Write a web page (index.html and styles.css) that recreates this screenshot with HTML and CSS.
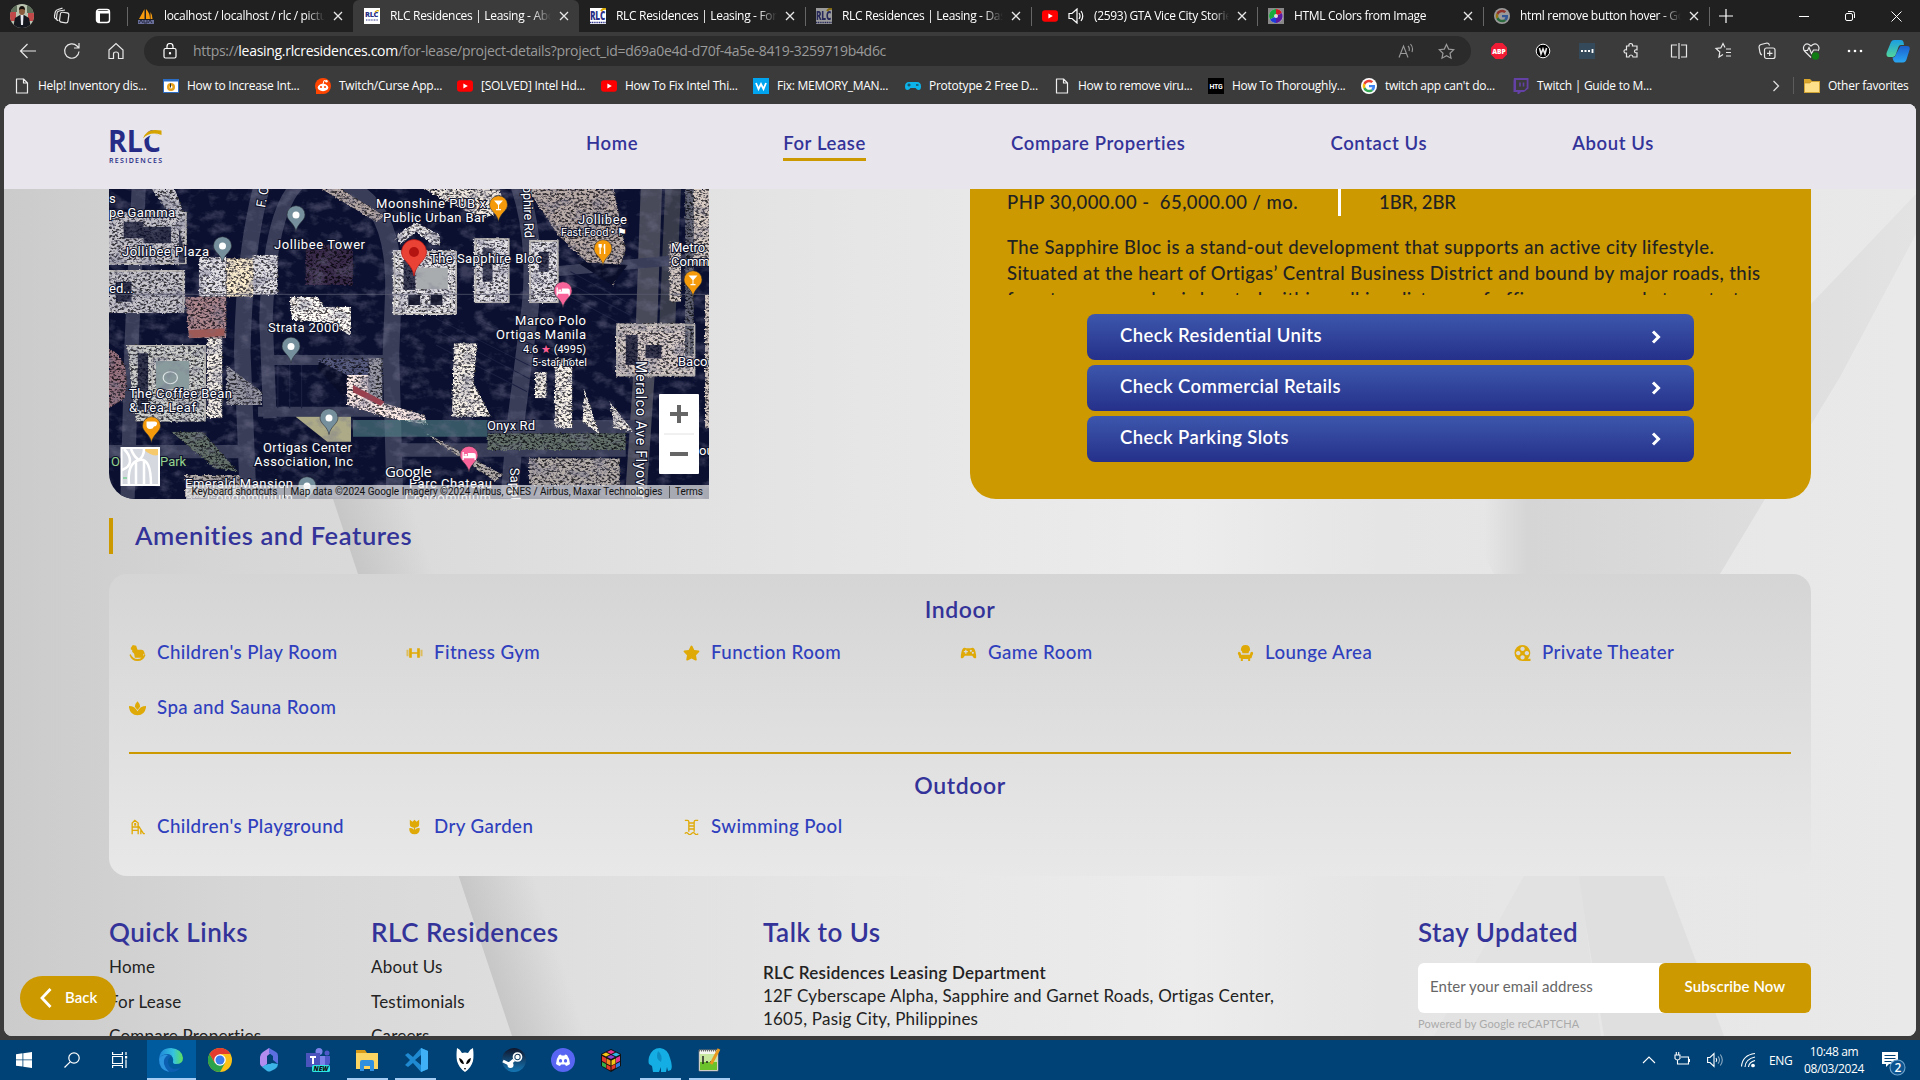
FILE: index.html
```html
<!DOCTYPE html>
<html lang="en">
<head>
<meta charset="utf-8">
<title>RLC Residences | Leasing - About</title>
<link rel="stylesheet" href="styles.css">
</head>
<body>
<svg class="defs" width="0" height="0" aria-hidden="true">
  <defs>
    <symbol id="x" viewBox="0 0 16 16"><path d="M4 4l8 8M12 4l-8 8" fill="none" stroke="#e8e8e8" stroke-width="1.3"/></symbol>
    <symbol id="rlc" viewBox="0 0 16 16"><rect width="16" height="16" fill="#fff"/><text x="1" y="9" font-family="Open Sans" font-weight="800" font-size="7" fill="#2b3088" textLength="13" lengthAdjust="spacingAndGlyphs">RLC</text><path d="M11 4q2-2 4-1" stroke="#d9a900" stroke-width="1.3" fill="none"/><path d="M2 12h12" stroke="#2b3088" stroke-width="1" stroke-dasharray="1 .6"/></symbol>
    <symbol id="rlcbig" viewBox="0 0 16 16"><rect width="16" height="16" fill="#fff"/><text x="0" y="12" font-family="Open Sans" font-weight="800" font-size="13" fill="#2b3088" textLength="15" lengthAdjust="spacingAndGlyphs">RLC</text><path d="M11 3q2-3 5-2" stroke="#d9a900" stroke-width="2" fill="none"/><path d="M0 14.5h16" stroke="#2b3088" stroke-width="1.6" stroke-dasharray="1.2 .6"/></symbol>
    <symbol id="yt" viewBox="0 0 16 16"><rect x="0" y="2.2" width="16" height="11.6" rx="3" fill="#f00"/><path d="M6.4 5.4v5.2L10.8 8z" fill="#fff"/></symbol>
    <symbol id="file" viewBox="0 0 16 16"><path d="M2.5 1h7l4 4v10h-11zM9.500 1v4h4" fill="none" stroke="#eee" stroke-width="1.2" stroke-linejoin="round"/></symbol>
    <symbol id="g" viewBox="0 0 48 48"><circle cx="24" cy="24" r="24" fill="#fff"/><g transform="translate(5 5) scale(.79)"><path fill="#EA4335" d="M24 9.500c3.540 0 6.710 1.220 9.210 3.600l6.850-6.850C35.900 2.380 30.470 0 24 0 14.620 0 6.510 5.380 2.560 13.220l7.980 6.190C12.430 13.720 17.740 9.500 24 9.500z"/><path fill="#4285F4" d="M46.980 24.550c0-1.570-.15-3.090-.38-4.550H24v9.020h12.940c-.58 2.960-2.260 5.480-4.780 7.180l7.730 6c4.510-4.180 7.090-10.360 7.090-17.650z"/><path fill="#FBBC05" d="M10.530 28.590c-.48-1.450-.76-2.990-.76-4.590s.27-3.140.76-4.590l-7.980-6.190C.92 16.460 0 20.120 0 24s.92 7.540 2.560 10.780z"/><path fill="#34A853" d="M24 48c6.480 0 11.930-2.130 15.890-5.810l-7.730-6c-2.150 1.450-4.920 2.300-8.160 2.300-6.260 0-11.570-4.220-13.470-9.910l-7.980 6.190C6.510 42.620 14.620 48 24 48z"/></g></symbol>
    <symbol id="pin" viewBox="-10 -10 20 28" overflow="visible"><path d="M0-9.300A9 9 0 0 1 9-.2C9 6 1.500 8 0 16.500-1.500 8-9 6-9-.2A9 9 0 0 1 0-9.300z" stroke="#2a2f3a" stroke-width=".6"/></symbol>
    <symbol id="chev" viewBox="0 0 12 16"><path d="M3 2.500L8.500 8 3 13.500" fill="none" stroke="#fff" stroke-width="3"/></symbol>
  </defs>
</svg>

<div class="tabs">
  <div class="tab-tools">
    <svg width="24" height="24" viewBox="0 0 24 24"><clipPath id="av"><circle cx="12" cy="12" r="12"/></clipPath><g clip-path="url(#av)"><path fill="#b9c3b0" d="M0 0h24v24H0z"/><path fill="#c04848" d="M0 8h6v9H0zM18 9h6v8h-6z"/><path fill="#5d6f58" d="M0 0h7v8H0zM17 1h7v8h-7z"/><path d="M3 24l2-10 5-3h4l5 3 2 10z" fill="#15181f"/><path d="M10.500 11h3l-.5 10h-2z" fill="#e8e8ef"/><ellipse cx="12" cy="7" rx="3" ry="4" fill="#8a5a3c"/><path d="M9 6q0-4 3-4t3 4q-3-2-6 0z" fill="#17110e"/></g></svg>
    <svg width="18" height="18" viewBox="0 0 18 18" fill="none" stroke="#e6e6e6" stroke-width="1.200"><rect x="7" y="5.500" width="8.500" height="10" rx="2" transform="rotate(8 11 10)"/><path d="M5.500 13.500q-2 0-2-2l.5-5q0-2 2-2.500l6-1M3 12q-2-1-1.500-3l.8-4Q3 3 5 2.500l4.500-1.300"/></svg>
    <svg width="16" height="16" viewBox="0 0 16 16" fill="none" stroke="#fff" stroke-width="1.400"><rect x="1.500" y="1.500" width="13" height="13" rx="2.500"/><path d="M1.500 3h13v2.500h-13zM2 5h3v9H2z" fill="#fff" stroke="none"/></svg>
  </div>
  <div class="tab sep"><svg class="fav" viewBox="0 0 16 16"><path d="M1 11L6.500 1v10zM8 11V1q4 4 4 10zM12.500 11V4q2 3 2 7z" fill="#f89c0e"/><path d="M0 12h16v4H0z" fill="#6a6f9a"/><path d="M1 15l2-3 2 3M6 12v3h3v-3M10 15l2-3 2 3" stroke="#252a44" fill="none"/></svg><span>localhost / localhost / rlc / pictures</span><svg class="x"><use href="#x"/></svg></div>
  <div class="tab active"><svg class="fav"><use href="#rlc"/></svg><span>RLC Residences | Leasing - About</span><svg class="x"><use href="#x"/></svg></div>
  <div class="tab"><svg class="fav"><use href="#rlcbig"/></svg><span>RLC Residences | Leasing - For Lease</span><svg class="x"><use href="#x"/></svg></div>
  <div class="tab sep"><svg class="fav dim"><use href="#rlcbig"/></svg><span>RLC Residences | Leasing - Dashboard</span><svg class="x"><use href="#x"/></svg></div>
  <div class="tab sep"><svg class="fav"><use href="#yt"/></svg><svg class="fav spk" viewBox="0 0 16 16" fill="none" stroke="#fff" stroke-width="1.200"><path d="M1 5.500h3l5-4.500v14l-5-4.500H1zM11 5q2 3 0 6M13 3q3.500 5 0 10"/></svg><span>(2593) GTA Vice City Stories</span><svg class="x"><use href="#x"/></svg></div>
  <div class="tab sep"><svg class="fav" viewBox="0 0 16 16"><path fill="#888" d="M0 0h16v16H0z"/><circle cx="8" cy="8" r="7" fill="#ddd"/><path d="M8 8V1a7 7 0 0 1 6 4z" fill="#d01b24"/><path d="M8 8L2 11.500A7 7 0 0 1 8 1z" fill="#18a83c"/><path d="M8 8l6-3a7 7 0 0 1-6 10z" fill="#5a1aa0"/><path d="M8 8v7a7 7 0 0 1-6-3.500z" fill="#1c3bd8"/><circle cx="8" cy="8" r="2" fill="#ddd"/></svg><span>HTML Colors from Image</span><svg class="x"><use href="#x"/></svg></div>
  <div class="tab sep"><svg class="fav dim"><use href="#g"/></svg><span>html remove button hover - Google</span><svg class="x"><use href="#x"/></svg></div>
  <div class="tab-end sep"><svg width="14" height="14" viewBox="0 0 14 14"><path d="M7 0v14M0 7h14" stroke="#fff" stroke-width="1.200"/></svg></div>
  <div class="win">
    <svg width="10" height="10"><path d="M0 5.500h10" stroke="#fff"/></svg>
    <svg width="10" height="10" viewBox="0 0 10 10" fill="none" stroke="#fff"><rect x=".5" y="2.500" width="7" height="7" rx="1.500"/><path d="M3 .5h4.500q2 0 2 2V7"/></svg>
    <svg width="11" height="11"><path d="M.5.5l10 10M10.500.5l-10 10" stroke="#fff"/></svg>
  </div>
</div>

<div class="toolbar">
  <div class="navbtns">
    <svg viewBox="0 0 18 18"><path d="M17 9H2M8.500 2L1.500 9l7 7"/></svg>
    <svg viewBox="0 0 18 18"><path d="M16 9.500A7.200 7.200 0 1 1 14 4l2 2M16 1v5h-5"/></svg>
    <svg viewBox="0 0 18 18"><path d="M2 8l7-6.500L16 8v8.500h-4.500V12q0-2-2.500-2t-2.500 2v4.500H2z"/></svg>
  </div>
  <div class="url">
    <svg width="14" height="16" viewBox="0 0 14 16" fill="none" stroke="#fff" stroke-width="1.200"><rect x="1" y="5.500" width="12" height="9.500" rx="1.500"/><path d="M4 5.500V3.500a3 3 0 0 1 6 0v2"/><circle cx="7" cy="10.300" r=".6" fill="#fff"/></svg>
    <span class="addr">https://<b>leasing.rlcresidences.com</b>/for-lease/project-details?project_id=d69a0e4d-d70f-4a5e-8419-3259719b4d6c</span>
    <svg class="ua" width="16" height="16" viewBox="0 0 16 16" fill="none" stroke="#9a9a9a" stroke-width="1.100"><path d="M1 14.500L5.500 3 10 14.500M2.500 10.500h6M10 3q2 2 1 5M12.500 1q3 3.500 1.500 8"/></svg>
    <svg width="17" height="17" viewBox="0 0 17 17" fill="none" stroke="#9a9a9a" stroke-width="1.200"><path d="M8.500 1.500l2.200 4.600 5 .6-3.700 3.500 1 5-4.500-2.500L4 15.200l1-5L1.300 6.700l5-.6z"/></svg>
  </div>
  <div class="ext">
    <svg viewBox="0 0 18 18"><path d="M5.500 1h7L17 5.500v7L12.500 17h-7L1 12.500v-7z" fill="#f01b35" stroke="none"/><text x="2.300" y="11.800" font-family="Open Sans" font-weight="800" font-size="7.500" fill="#fff" stroke="none" textLength="13.500" lengthAdjust="spacingAndGlyphs">ABP</text></svg>
    <svg viewBox="0 0 18 18"><circle cx="9" cy="9" r="6.800" fill="#000" stroke="#fff" stroke-width="1"/><path d="M5.500 6l1.500 6 2-5 2 5 1.500-6" stroke-width="1.600"/></svg>
    <svg viewBox="0 0 18 18"><path fill="#34495a" stroke="none" d="M1 1h16v16H1z"/><path d="M3 9h2M6.500 9h2M10 9h2M14.500 7v4" stroke="#fff" stroke-width="1.800"/></svg>
    <svg viewBox="0 0 18 18"><path d="M4.500 4H7q-.5-2.500 1.700-2.500T10.500 4H15v3.800q-2.500-.3-2.500 1.500t2.500 1.600V15h-4q-.2-2-2-2t-2 2H4.500v-4Q2 11.200 2 9.300T4.500 7.800z"/></svg>
    <svg viewBox="0 0 18 18"><path d="M9 1v16M7 3H1.500v12H7M11 3h5.500v12H11"/></svg>
    <svg viewBox="0 0 18 18"><path d="M9 12.500l-4 2.500.8-5L2 6.500l4.800-.6L9 1.500l2 4M12 7h5M12 10.500h5M12 14h5"/></svg>
    <svg viewBox="0 0 18 18"><rect x="6.500" y="6" width="10.500" height="10.500" rx="2"/><path d="M11.700 8.500v5.500M9 11.300h5.500M4 13q-1.500-.5-2-2.500L1 5q0-2 2-2.500L9 1q2 0 2.500 2.500"/></svg>
    <svg viewBox="0 0 18 18"><path d="M9 15.500L2.500 9Q.5 6 2.300 3.500T7 2.500l2 1.500 2-1.500q3-1.500 5 1t0 5.500M1.500 8.500h4l1.500-3 2.500 6 2-3.500h4"/><circle cx="13.500" cy="14" r="3.700" fill="#0f7b12" stroke="none"/></svg>
    <svg viewBox="0 0 18 18"><g fill="#fff" stroke="none"><circle cx="3" cy="9" r="1.300"/><circle cx="9" cy="9" r="1.300"/><circle cx="15" cy="9" r="1.300"/></g></svg>
    <svg class="copilot" viewBox="0 0 24 24" stroke="none"><defs><linearGradient id="cp1" x2="0" y2="1"><stop stop-color="#1b9de2"/><stop offset="1" stop-color="#52d69a"/></linearGradient><linearGradient id="cp2" x2="0" y2="1"><stop stop-color="#1a5fd0"/><stop offset="1" stop-color="#2aa6f0"/></linearGradient></defs><path stroke="none" fill="url(#cp1)" d="M5 3q1-2 3-2h7q2 0 2.500 2L18 6h-3q-2 0-2.600 2L10 15q-.8 3-3 3H3q-3 0-2.500-4z"/><path stroke="none" fill="url(#cp2)" d="M14.500 7H21q3.500 0 2.500 4l-3 9.500q-1 3-3.500 3h-7q-2.500 0-3.500-5 2.500 0 3.500-3.500z"/></svg>
  </div>
</div>

<div class="bookmarks">
  <a><svg><use href="#file"/></svg>Help! Inventory dis...</a>
  <a><svg viewBox="0 0 16 16"><path fill="#fff" stroke="#2b6cc4" d="M.5 1.500h15v13H.5z"/><path fill="#2b6cc4" d="M0 1h16v2.500H0z"/><circle cx="8" cy="9" r="4" fill="#e6a11a"/><circle cx="8" cy="9" r="1.500" fill="#fff"/><path d="M7.500 5.500v4" stroke="#333"/></svg>How to Increase Int...</a>
  <a><svg viewBox="0 0 16 16"><circle cx="8" cy="8" r="8" fill="#ff4500"/><path fill="#ff4500" d="M1 11v5h6z"/><ellipse cx="8" cy="9.500" rx="5.300" ry="3.700" fill="#fff"/><circle cx="6" cy="9" r="1.100" fill="#ff4500"/><circle cx="10" cy="9" r="1.100" fill="#ff4500"/><path d="M8 6l1-3.500 2.500.7" stroke="#fff" fill="none"/><circle cx="11.500" cy="3.300" r="1.200" fill="#fff"/></svg>Twitch/Curse App...</a>
  <a><svg><use href="#yt"/></svg>[SOLVED] Intel Hd...</a>
  <a><svg><use href="#yt"/></svg>How To Fix Intel Thi...</a>
  <a><svg viewBox="0 0 16 16"><path fill="#00a4ef" d="M0 0h16v16H0z"/><path d="M3 5l2.500 6L8 6l2.500 5L13 5" stroke="#fff" stroke-width="1.800" fill="none"/></svg>Fix: MEMORY_MAN...</a>
  <a><svg viewBox="0 0 16 16"><path fill="#0cb4ea" d="M4 4h8q4 0 4 4.500Q16 12 13.500 12 12 12 10.500 10h-5Q4 12 2.500 12 0 12 0 8.500 0 4 4 4z"/><path d="M2.500 7h3M4 5.500v3M11 7h2.500" stroke="#1c4d60" stroke-width="1.300"/></svg>Prototype 2 Free D...</a>
  <a><svg><use href="#file"/></svg>How to remove viru...</a>
  <a><svg viewBox="0 0 16 16"><path d="M0 0h16v16H0z"/><text x="1.500" y="11" font-family="Roboto" font-weight="700" font-size="8" fill="#fff" textLength="13" lengthAdjust="spacingAndGlyphs">HTG</text></svg>How To Thoroughly...</a>
  <a><svg><use href="#g"/></svg>twitch app can't do...</a>
  <a><svg viewBox="0 0 16 16"><path fill="#6441a5" d="M1 0h14.500v10.500L11 14H8l-2 2H4.500v-2H.5V3z"/><path fill="#3b3b3b" d="M3 2h10.700v7.500L11.500 12H3z"/><path d="M7 4.500v4M10.500 4.500v4" stroke="#6441a5" stroke-width="1.600"/></svg>Twitch | Guide to M...</a>
  <svg class="more" viewBox="0 0 8 12"><path d="M1.500 1L6.500 6l-5 5" fill="none" stroke="#ddd" stroke-width="1.300"/></svg>
  <a class="other"><svg viewBox="0 0 16 16"><path fill="#d9a62b" d="M0 1h6l2 2h8v12H0z"/><path fill="#ffe08a" stroke="#c08f1e" stroke-width=".6" d="M.5 5H6l1.500-1.500h8v11H.5z"/></svg>Other favorites</a>
</div>

<div class="viewport">
  <svg class="bg" viewBox="0 0 1912 932" preserveAspectRatio="none">
    <defs>
      <linearGradient id="base"><stop stop-color="#cbcbcb"/><stop offset=".12" stop-color="#d6d6d6"/><stop offset=".28" stop-color="#dedede"/><stop offset=".45" stop-color="#e6e6e6"/><stop offset=".62" stop-color="#ececec"/><stop offset=".72" stop-color="#e5e5e5"/><stop offset="1" stop-color="#e9e9e9"/></linearGradient>
      <linearGradient id="fold" gradientUnits="userSpaceOnUse" x1="330" y1="400" x2="400" y2="377"><stop stop-color="#c6c6c6"/><stop offset="1" stop-color="#c6c6c6" stop-opacity="0"/></linearGradient>
      <linearGradient id="foldR" gradientUnits="userSpaceOnUse" x1="1480" y1="0" x2="1912" y2="0"><stop stop-color="#d4d4d4" stop-opacity="0"/><stop offset=".1" stop-color="#d5d5d5"/><stop offset=".7" stop-color="#dedede"/><stop offset="1" stop-color="#e3e3e3"/></linearGradient>
    </defs>
    <path d="M0 0h1912v932H0z" fill="url(#base)"/>
    <path d="M226 85L329 395l179 537h110L329 65z" fill="url(#fold)"/>
    <path d="M1450 395L1807 200 1912 90V130L1836 273 1808 319 1761 395 1716 470H1490z" fill="url(#foldR)"/>
    <path d="M1554 772l22 13 24 147h120l-60-160z" fill="#dfdfdf"/>
    <path d="M1520 772h55l22 160H1430z" fill="#e2e2e2"/>
  </svg>
  <header class="site-nav">
    <svg class="logo" viewBox="0 0 53 34"><text x="-1" y="22" font-family="Open Sans" font-weight="700" font-size="30" fill="#262b86" textLength="53" lengthAdjust="spacingAndGlyphs">RLC</text><path d="M33 8Q37-1 53 0v6Q42 2 35 10z" fill="#e8e5ec"/><path d="M34 8.500Q37 0 46 0q4 0 6.500.6V5Q41 1 34 8.500z" fill="#d6a400"/><text x="0" y="33" font-family="Open Sans" font-weight="600" font-size="7" fill="#262b86" textLength="53" lengthAdjust="spacing">RESIDENCES</text></svg>
    <nav><a>Home</a><a class="on">For Lease</a><a>Compare Properties</a><a>Contact Us</a><a>About Us</a></nav>
  </header>
  <main>
    <section class="top">
      <div class="map">
        <svg width="600" height="310" viewBox="0 0 600 310">
          <defs>
            <filter id="tex" x="0" y="0" width="100%" height="100%" color-interpolation-filters="sRGB"><feTurbulence type="fractalNoise" baseFrequency=".13 .16" numOctaves="3" seed="7" result="n"/><feColorMatrix in="n" type="matrix" values="4.500 0 0 0 -1.500  4.500 0 0 0 -1.500  4.400 0 0 0 -1.400  0 0 0 0 1" result="c"/><feDisplacementMap in="SourceGraphic" in2="n" scale="9" xChannelSelector="R" yChannelSelector="G" result="d"/><feComposite in="d" in2="c" operator="arithmetic" k1=".95" k2=".35" result="m"/><feComposite in="m" in2="d" operator="in"/></filter>
            <filter id="grain" x="0" y="0" width="100%" height="100%" color-interpolation-filters="sRGB"><feTurbulence type="fractalNoise" baseFrequency=".06 .09" numOctaves="4" seed="3"/><feColorMatrix type="matrix" values="0 0 0 0 .45  0 0 0 0 .45  0 0 0 0 .55  3 0 0 0 -1.450"/></filter>
          </defs>
          <path fill="#0b1030" d="M0 0h600v310H0z"/>
          <g transform="scale(.3954 .3333) translate(-23 -12)">
            <g fill="none" stroke="#393d58" stroke-linejoin="round">
              <path stroke-width="36" d="M98 12L80 480 70 940"/>
              <path stroke-width="42" d="M410 0q-45 200-50 500l15 440"/>
              <path stroke-width="34" d="M500 0q-70 80-80 400l10 300"/>
              <path stroke-width="42" d="M620 0q130 60 122 330l-6 180 10 430"/>
              <path stroke-width="44" d="M1060 0q50 180 25 400l-35 330-15 210"/>
              <path stroke-width="54" stroke="#484a5a" d="M1395 0l-15 500-25 440"/>
              <path stroke-width="40" stroke="#383b4a" d="M1450 0l-15 420"/>
              <path stroke-width="30" d="M430 525h300M400 680h320M1100 265l450-50"/>
              <path stroke-width="40" d="M740 795h590M23 800h340M980 725h400"/>
            </g>
            <g stroke="#1a1f40" stroke-width="3"><path d="M850 400l300 180M860 440l240 150M850 480l230 140M1190 260l140 90M1180 290l160 100M1180 330l160 100M450 540v130M480 540v130M510 540v130M950 400l200 110"/></g>
            <g filter="url(#tex)">
              <path fill="#9a989b" d="M130 12h60l30 100-40-20zM23 80h197v160H23zM23 255h193v130H23z"/>
              <path fill="#b9b3ab" d="M820 12h190l20 60-60 30-90-50z"/>
              <path fill="#8f8480" d="M560 12h50l110 80-20 20zM1080 12h220l30 180-30 110-60-60-80-90z"/>
              <path fill="#b0aeb0" d="M250 215h70v120h-70zM385 210h65v120h-65zM1085 165h75v190h-75zM945 160h90v195h-90z"/>
              <path fill="#c8ba9f" d="M320 220h68v115h-68z"/>
              <path fill="#85686c" d="M215 335h105v125h-95z"/>
              <path fill="#d2cbc0" d="M480 335h70l20 30h65v90l-50-40-100-10z"/>
              <path fill="#2c2038" d="M520 180h120v120H520z"/>
              <path fill="#b5b3b3" d="M740 195h162v195H740zM750 150l50-40 60 40v30h-20l-40-40-40 40z"/>
              <path fill="#a59c98" d="M1305 415h200v160h-200z"/>
              <path fill="#a0a19d" d="M68 480h200v230H90z"/>
              <path fill="#745860" d="M23 490q60 30 40 150l-40 30z"/>
              <path fill="#bfbab2" d="M270 460h40v240h-40zM895 475h60l-10 120 45 100h-100zM1150 520h45v210h-45zM1100 560h30v80h-30zM1225 610l40 140-45-40zM1290 650l60 90-50-10z"/>
              <path fill="#77777f" d="M320 540l90 80v40h-90zM680 520h35v130h-35z"/>
              <path fill="#3f435e" d="M550 520h130v50l-60 40-65-60z"/>
              <path fill="#c4b6b1" d="M625 570h55v70l140 50 10 30-100-20-105-40z"/>
              <path fill="#a79e96" d="M1500 12h60v230h-60zM1440 170h30v180h-30zM1530 330h20v400h-20z"/>
              <path fill="#4c5650" d="M980 745h350v50H980zM180 740h80l90 120-60-10z"/>
              <path fill="#8b8581" d="M1085 820h230v80h-230zM820 740l200 130-20 20-160-130zM215 870h140v70H215z"/>
              <path fill="#4a4c58" d="M1480 12h22v500h-22z"/>
            </g>
            <path fill="#c9c597" opacity=".85" d="M495 695h140v75h-60z"/>
            <path fill="#54858a" opacity=".6" d="M640 705h340v50H640z"/>
            <g fill="#090d28"><path d="M768 225h30v90h-30zM200 130l20 110h-20zM968 190h25v100h-25zM60 110h50v50H60zM40 290h40v60H40zM110 125h70v50h-70zM1110 200h25v60h-25zM1330 450h30v90h-30zM96 505h26v170H96zM1380 480h40v40h-40z" opacity=".8"/><path d="M1205 230l130 10-40 60zM555 530l70 40-5 70-70-90z"/></g>
            <g fill="none" stroke="#bdb9b5" stroke-width="4"><path d="M745 200h156v186H745zM1308 420h196v150h-196zM72 482h194v220M950 162h84v190h-84zM1088 168h70v184h-70zM25 235h192V80M25 258h186v125"/><path stroke-width="2" d="M756 214h134v158H756zM133 515h105v110H133zM1320 435h170v120h-170zM745 165l55-45 60 45"/></g>
            <path fill="#a9acae" d="M800 248h80v64h-80z"/><path fill="#8a9b9d" d="M142 528h84v84h-84z"/><circle cx="178" cy="578" r="18" fill="none" stroke="#dfe7e7" stroke-width="3"/>
            <path fill="#15182c" d="M780 330h30v30h-30zM836 330h30v30h-30z"/>
            <path fill="#9e5a56" d="M225 436l90-6v22l-90 8z"/><path fill="#98404e" d="M640 600l80 50-10 12-70-40z"/>
            <path stroke="#5a5d70" stroke-width="2" d="M23 328h1520"/>
          </g>
          <path filter="url(#grain)" d="M0 0h600v310H0z" opacity=".45"/>
          <g class="lab">
            <text x="267" y="19" textLength="110">Moonshine PUB x</text><text x="274" y="33" textLength="103">Public Urban Bar</text>
            <text x="469" y="35" textLength="49">Jollibee</text><text x="452" y="47" class="s" textLength="66">Fast Food • ⚑</text>
            <text x="165" y="60" textLength="91">Jollibee Tower</text><text x="13" y="67" textLength="87">Jollibee Plaza</text>
            <text x="0" y="28" textLength="66">pe Gamma</text><text x="0" y="14">s</text><text x="0" y="104">ed...</text>
            <text x="321" y="74" textLength="112">The Sapphire Bloc</text>
            <text x="562" y="63">Metro</text><text x="562" y="77">Comm</text>
            <text x="406" y="136" textLength="71">Marco Polo</text><text x="387" y="150" textLength="90">Ortigas Manila</text>
            <text x="414" y="164" class="s" textLength="63">4.6 <tspan fill="#ff5f95">★</tspan> (4995)</text><text x="423" y="177" class="s" textLength="55">5-star hotel</text>
            <text x="159" y="143" textLength="71">Strata 2000</text>
            <text x="20" y="209" textLength="103">The Coffee Bean</text><text x="20" y="223" textLength="67">&amp; Tea Leaf</text>
            <text x="154" y="263" textLength="89">Ortigas Center</text><text x="145" y="277" textLength="99">Association, Inc</text>
            <text x="378" y="241" textLength="48">Onyx Rd</text><text x="569" y="177">Baco</text><text x="590" y="266">ou</text>
            <text transform="translate(527 172) rotate(90)" textLength="138" class="r">Meralco Ave Flyover</text>
            <text transform="translate(414 -3) rotate(88)" textLength="52">pphire Rd</text>
            <text transform="translate(156 19) rotate(-80)">F. Ortigas</text>
            <text transform="translate(401 279) rotate(88)">Sapphire</text>
            <text x="2" y="277" fill="#93d18f">O</text><text x="51" y="277" fill="#93d18f">Park</text>
            <text x="76" y="299" textLength="108">Emerald Mansion</text><text x="98" y="313" textLength="86">Condominium</text>
            <text x="300" y="299" textLength="83">Parc Chateau</text><text x="296" y="313" textLength="86">Condominium</text>
            <text x="276" y="288" font-size="16" class="goog" textLength="47">Google</text>
          </g>
          <g fill="#75909c"><use href="#pin" x="177" y="16" width="20" height="28"/><use href="#pin" x="103.500" y="47" width="20" height="28"/><use href="#pin" x="172" y="147.500" width="20" height="28"/><use href="#pin" x="210" y="219" width="20" height="28"/><use href="#pin" x="188" y="287" width="20" height="28"/></g>
          <g fill="#fff"><circle cx="187" cy="26" r="3.500"/><circle cx="113.500" cy="57" r="3.500"/><circle cx="182" cy="157.500" r="3.500"/><circle cx="220" cy="229" r="3.500"/><circle cx="198" cy="297" r="3.500"/></g>
          <g fill="#f59b0b"><use href="#pin" x="379.500" y="6" width="20" height="28"/><use href="#pin" x="484" y="50" width="20" height="28"/><use href="#pin" x="574" y="81" width="20" height="28"/><use href="#pin" x="32.500" y="227" width="20" height="28"/></g>
          <g fill="#f8639a"><use href="#pin" x="444" y="92" width="20" height="28"/><use href="#pin" x="350" y="256.500" width="20" height="28"/></g>
          <g fill="#fff"><path id="cup" d="M385 11.500h9l-4 4.500v4h2v1.200h-5V20h2v-4z"/><use href="#cup" x="194.500" y="75"/><path d="M489.500 55v3.500h1v6.500h1.300v-6.500h1V55zM495 55q-1 3 0 5v5h1.300V55z"/><path d="M37.500 232.500h8q3 0 2.500 2.500t-3 2.500q-1 2.500-4 2.500-3.500 0-3.500-4z"/><path id="bed" d="M447.500 98.500h1.300v4h4v-3h6q2 0 2 2v5h-1.300v-1.700h-10.700v1.700h-1.300zM449.500 100.500h2.500v1.800h-2.500z"/><use href="#bed" x="-94" y="164.500"/></g>
          <path d="M305 50.500a12.500 12.500 0 0 1 12.500 12.500c0 9-10.500 11-12.500 24-2-13-12.500-15-12.500-24A12.500 12.500 0 0 1 305 50.500z" fill="#ea4335" stroke="#b31412" stroke-width=".7"/><circle cx="305" cy="63" r="5" fill="#b31412"/>
          <path fill="#f2f2f2" opacity=".68" d="M77 296h523v14H77z"/>
          <g font-family="Roboto" font-size="10" fill="#111"><text x="82.500" y="306" textLength="86">Keyboard shortcuts</text><text x="181.500" y="306" textLength="372">Map data ©2024 Google Imagery ©2024 Airbus, CNES / Airbus, Maxar Technologies</text><text x="566" y="306" textLength="28">Terms</text><path d="M175.500 297v12M560.500 297v12" stroke="#555"/></g>
          <g><path fill="#fff" d="M11.500 258h39.500v39H11.500z"/><path fill="#d5d9df" d="M13.500 260h35.500v35H13.500z"/><path fill="#f5c96c" d="M34 260h15v6q-6 2-15-6z"/><path fill="none" stroke="#fff" stroke-width="2.500" d="M13 281q8-3 8-9t-6-12M20 296q-2-22 10-25t12 25M27 296v-23M35 296v-24M22 260q3 8 8 11 5-4 5-11"/><path d="M14 289h4" stroke="#7ccf96" stroke-width="1.500"/></g>
          <rect x="550" y="205" width="40" height="80" rx="1" fill="#fff"/><path d="M555 245h30" stroke="#e2e2e2"/><path d="M561 225h18M570 216v18M561 265h18" stroke="#666" stroke-width="4"/>
        </svg>
      </div>
      <div class="info">
        <div class="facts"><span class="price">PHP 30,000.00 -&nbsp; 65,000.00 / mo.</span><span class="rooms">1BR, 2BR</span></div>
        <p class="desc">The Sapphire Bloc is a stand-out development that supports an active city lifestyle.<br>Situated at the heart of Ortigas’ Central Business District and bound by major roads, this<br>four-tower complex is located within walking distance of offices, supermarkets, entert</p>
        <div class="ctas">
          <a>Check Residential Units<svg width="12" height="16"><use href="#chev"/></svg></a>
          <a>Check Commercial Retails<svg width="12" height="16"><use href="#chev"/></svg></a>
          <a>Check Parking Slots<svg width="12" height="16"><use href="#chev"/></svg></a>
        </div>
      </div>
    </section>
    <h2 class="title">Amenities and Features</h2>
    <section class="panel">
      <h3>Indoor</h3>
      <div class="grid">
        <div><svg viewBox="0 0 24 24"><path d="M2 4l3-4 5 1 2 6h6q3 0 4 3l1 4-2-1-1 6H8l-1-6-3-3V7L2 7zM0 15l1.500-1.500Q5 21 12 21t10.500-7.500L24 15q-3 9-12 9T0 15z"/></svg>Children's Play Room</div>
        <div><svg viewBox="0 0 24 24"><path d="M4 5h4v14H4zM16 5h4v14h-4zM8 11h8v2H8z"/><path opacity=".6" d="M0 7h3v10H0zM21 7h3v10h-3z"/></svg>Fitness Gym</div>
        <div><svg viewBox="0 0 576 512"><path d="M259.300 17.800L194 150.200 47.900 171.500c-26.200 3.800-36.700 36.100-17.700 54.600l105.700 103-25 145.500c-4.500 26.300 23.200 46 46.400 33.700L288 439.600l130.700 68.700c23.200 12.200 50.900-7.400 46.400-33.700l-25-145.500 105.700-103c19-18.500 8.500-50.800-17.700-54.600L382 150.200 316.700 17.800c-11.700-23.600-45.600-23.900-57.400 0z"/></svg>Function Room</div>
        <div><svg viewBox="0 0 24 24"><path fill-rule="evenodd" d="M6 4q6 2 12 0 3 0 4.500 6t1 9q-2.500 3-6-3h-11q-3.500 6-6 3Q0 16 1.500 10T6 4zM7 7v2H5v2h2v2h2v-2h2V9H9V7zM15.500 7a1.500 1.500 0 1 0 .1 0zM18.500 10a1.500 1.500 0 1 0 .1 0z"/></svg>Game Room</div>
        <div><svg viewBox="0 0 24 24"><path d="M5 8q0-8 7-8t7 8q-2 1-2.500 4.500h-9Q7 9 5 8zM2 10q3-.5 3.500 4.500h13Q19 9.500 22 10q3 2 0 6l-1 4h-2v4h-3v-3H8v3H5v-4H3l-1-4q-3-4 0-6z"/></svg>Lounge Area</div>
        <div><svg viewBox="0 0 24 24"><path fill-rule="evenodd" d="M12 0a12 12 0 0 1 8 20.500h4V24H12A12 12 0 0 1 12 0zm0 2.500a3.200 3.200 0 1 0 .1 0zM5.500 9a3.200 3.200 0 1 0 .1 0zM18.500 9a3.200 3.200 0 1 0 .1 0zM12 15.300a3.200 3.200 0 1 0 .1 0z"/></svg>Private Theater</div>
        <div><svg viewBox="0 0 24 24"><path d="M12 2q4 4 4 8l-4 5-4-5q0-4 4-8zM-1 9q9 0 13 8 4-8 13-8-1 13-13 14Q0 22-1 9z"/></svg>Spa and Sauna Room</div>
      </div>
      <hr>
      <h3>Outdoor</h3>
      <div class="grid">
        <div><svg viewBox="0 0 24 24"><path fill="none" stroke="#dfaa08" stroke-width="2" d="M4 23V6l4-4 5 4v17M4 12h9M4 17h9M12 8l9 14h2M17 23v-6"/><path d="M7 6h3v4H7z"/></svg>Children's Playground</div>
        <div><svg viewBox="0 0 24 24"><path d="M5 1l4 3 3-3 3 3 4-3v7q0 5-6 5v3q3-4 7-2 0 9-8 9t-8-9q4-2 7 2v-3q-6 0-6-5z"/></svg>Dry Garden</div>
        <div><svg viewBox="0 0 24 24"><path fill="none" stroke="#dfaa08" stroke-width="2" d="M2 2h4q2 0 2 2v15M22 2h-4q-2 0-2 2v15M8 6h8M8 10.500h8M8 15h8M2 22q2.500-3 5 0t5 0 5 0 5 0"/></svg>Swimming Pool</div>
      </div>
    </section>
    <footer>
      <div class="c1"><h4>Quick Links</h4><a>Home</a><a>For Lease</a><a>Compare Properties</a></div>
      <div class="c2"><h4>RLC Residences</h4><a>About Us</a><a>Testimonials</a><a>Careers</a></div>
      <div class="c3"><h4>Talk to Us</h4><p><b>RLC Residences Leasing Department</b><br>12F Cyberscape Alpha, Sapphire and Garnet Roads, Ortigas Center,<br>1605, Pasig City, Philippines</p></div>
      <div class="c4"><h4>Stay Updated</h4><div class="form"><span>Enter your email address</span><b>Subscribe Now</b></div><small>Powered by Google reCAPTCHA</small></div>
    </footer>
  </main>
  <a class="back"><svg width="12" height="20" viewBox="0 0 12 20"><path d="M10.500 1L2 10l8.500 9" fill="none" stroke="#fff" stroke-width="2.800"/></svg><span>Back</span></a>
</div>

<div class="taskbar">
  <div class="sys">
    <svg viewBox="0 0 16 16"><path fill="#fff" d="M0 2.200l6.500-.9v6.200H0zM7.300 1.200L16 0v7.500H7.300zM0 8.300h6.500v6.300L0 13.700zM7.300 8.300H16V16l-8.700-1.200z"/></svg>
    <svg viewBox="0 0 16 16" fill="none" stroke="#fff" stroke-width="1.200"><circle cx="10" cy="6" r="5.200"/><path d="M6.200 9.800L.5 15.500"/></svg>
    <svg viewBox="0 0 16 16" fill="none" stroke="#fff" stroke-width="1.200"><path d="M.6 4.500h9.800v7H.6zM.6 0v2.500h9.800V0M.6 16v-2.500h9.800V16M14 0v3M14 7.500V16"/><path d="M13 4h2.200v2.500H13z" fill="#fff" stroke="none"/></svg>
  </div>
  <div class="apps">
    <i class="cur"><svg viewBox="0 0 24 24"><defs><linearGradient id="e1"><stop stop-color="#1f86d8"/><stop offset=".6" stop-color="#35c3e0"/><stop offset="1" stop-color="#5fe05a"/></linearGradient></defs><path fill="url(#e1)" d="M0 11Q1 0 12 0q11 1 12 10 0 6-7 6-3 0-3-2 1-5-3-7T0 11z"/><path fill="#0d5fb2" d="M0 12q2-6 8-6 3 0 5 2-4 1-4 6 1 7 7 7 4 0 6-2-3 5-10 5Q0 23 0 12z"/><path fill="#2c93dd" d="M0 11q3-5 9-4-5 3-4 9 1 4 5 8Q0 22 0 11z"/></svg></i>
    <i><svg viewBox="0 0 24 24"><circle cx="12" cy="12" r="12" fill="#fbc116"/><path d="M1.600 6A12 12 0 0 1 22.400 6H12z" fill="#e33b2e"/><path d="M1.600 6A12 12 0 0 0 12 24l5-9-10 0z" fill="#2ba24c"/><path d="M1.600 6l5.400 9 5-9z" fill="#e33b2e"/><circle cx="12" cy="12" r="5.800" fill="#fff"/><circle cx="12" cy="12" r="4.500" fill="#3b7ded"/></svg></i>
    <i><svg viewBox="0 0 24 24"><path fill="#b38cf0" d="M12 0L6 4Q3 6 3 9v6q0 3 3 4l4-3V8l5-4z"/><path fill="#5b6fe0" d="M12 0l7 4q2 1 2 4v8l-5-4V8l-4-3z"/><path fill="#3cb4e8" d="M8 17l7-2 6 1q0 3-3 5l-4 2q-2 1-4 0l-5-4z"/><path fill="#004275" d="M10 9l3-2 3 2v5l-3 2-3-1z"/></svg></i>
    <i><svg viewBox="0 0 24 24"><circle cx="13" cy="3.500" r="3.500" fill="#7b83eb"/><circle cx="21" cy="5" r="2.500" fill="#5059c9"/><path fill="#5059c9" d="M17 8h7v7q-2 4-6 3z"/><path fill="#7b83eb" d="M8 8h11v10H8z"/><path fill="#4b53bc" d="M0 5h14v14H0z"/><path d="M4 9h6M7 9v7" stroke="#fff" stroke-width="2"/><rect x="6" y="17" width="18" height="7" rx="1.500" fill="#2ce6e2"/><text x="7.500" y="23" font-family="Open Sans" font-weight="800" font-size="6.500" fill="#111" textLength="15" lengthAdjust="spacingAndGlyphs">NEW</text></svg></i>
    <i class="run"><svg viewBox="0 0 24 24"><path fill="#d99a17" d="M1 2h9l2 3H1z"/><path fill="#fcd462" d="M1 5h22v16H1z"/><path fill="#2f8fe0" d="M5 14q0-2 2-2h10q2 0 2 2v9h-4v-5H9v5H5z"/></svg></i>
    <i class="run"><svg viewBox="0 0 24 24"><path fill="#1f8ad2" d="M17 0l7 3v18l-7 3-8-9-5 4-3-2 5-5-5-5 3-2 5 4zM17 7l-6 5 6 5z" fill-rule="evenodd"/><path fill="#3fb0f5" d="M17 0l7 3v18l-7 3z"/></svg></i>
    <i><svg viewBox="0 0 24 24"><path fill="#fff" d="M4 0q3 1 5 5 3-1 6 0 2-4 5-5 1 8 0 13-2 7-8 11-6-4-8-11Q3 8 4 0z"/><path d="M6 10q4 1 5 6-4 0-5-6zM18 10q-4 1-5 6 4 0 5-6zM11 20h2l-1 2z"/></svg></i>
    <i><svg viewBox="0 0 24 24"><defs><linearGradient id="st" x2="0" y2="1"><stop stop-color="#10152b"/><stop offset="1" stop-color="#1577b5"/></linearGradient></defs><circle cx="12" cy="12" r="12" fill="url(#st)"/><circle cx="15.500" cy="9" r="4" fill="none" stroke="#fff" stroke-width="1.700"/><circle cx="15.500" cy="9" r="2.200" fill="#fff"/><path d="M1 13l6 3 5-4" stroke="#fff" stroke-width="3" fill="none"/><circle cx="8.500" cy="17" r="3" fill="#fff"/></svg></i>
    <i><svg viewBox="0 0 24 24"><circle cx="12" cy="12" r="12" fill="#5865f2"/><path fill="#fff" fill-rule="evenodd" d="M8 7l2-.5.500 1h3l.5-1L16 7q3 4 3 9-2 1.500-4 2l-1-1.500h-4L9 18q-2-.5-4-2 0-5 3-9zm1.500 4a1.600 1.800 0 1 0 .1 0zm5 0a1.600 1.800 0 1 0 .1 0z"/></svg></i>
    <i><svg viewBox="0 0 24 24"><path d="M12 1l10 5v12l-10 6-10-6V6z" fill="#111"/><path fill="#e8368f" d="M12 2l4 2-4 2-4-2z"/><path fill="#2fb4e6" d="M17 4.500l4 2-4 2-4-2z"/><path fill="#f5c518" d="M7 4.500l4 2-4 2-4-2z"/><path fill="#8b3fd0" d="M12 7l4 2-4 2-4-2z"/><path fill="#e23a2c" d="M3 8l4 2v5l-4-2z"/><path fill="#f28a1c" d="M7.500 10.500l4 2v5l-4-2z"/><path fill="#35b04a" d="M3 14l4 2v4l-4-2z"/><path fill="#f5c518" d="M12.500 12.500l4-2v5l-4 2z"/><path fill="#e8368f" d="M17 10l4-2v5l-4 2z"/><path fill="#e23a2c" d="M12.500 18l4-2v4l-4 2zM7.500 16.500l4 2v4l-4-2z"/><path fill="#2f7de6" d="M17 16l4-2v4l-4 2z"/></svg></i>
    <i class="run"><svg viewBox="0 0 24 24"><path fill="#14aee4" d="M1 9Q4 0 12 0q8 1 10 10 3 8 1 12l-3 1-1-4-1 5h-5v-5l-2 5H5l-1-6-3-2Q0 14 1 9z"/><path d="M10 3q-3 8 3 11 2-7-3-11z" fill="#0d8cc4"/></svg></i>
    <i class="run"><svg viewBox="0 0 24 24"><path fill="#f4f4ee" stroke="#888" stroke-width=".7" d="M2 2h19v21H2z"/><path fill="#6cc22a" d="M3 13h17v9H3z"/><path fill="#c8e8a0" d="M3 6h17v8H3z"/><path d="M6 8v8M9 14h2M13 14h2" stroke="#222" stroke-width="1.500"/><path d="M2 2.500h19" stroke="#666" stroke-width="2" stroke-dasharray="1 1"/><path d="M22 1l-8 15" stroke="#e89a1e" stroke-width="3"/></svg></i>
  </div>
  <div class="tray">
    <svg viewBox="0 0 16 16"><path d="M2 11l6-6 6 6"/></svg>
    <svg viewBox="0 0 16 16"><path d="M7 5h7.500v7H5M15.500 7v3M1 3h5v3.500q-1 1.500-2.500 1.500T1 6.500zM2.300 0v3M4.700 0v3M3.500 8v4h3"/></svg>
    <svg viewBox="0 0 16 16"><path d="M.6 5.500H3l4-4v13l-4-4H.6zM9 6q1.500 2 0 4"/><path opacity=".55" d="M11 4.300q3 3.700 0 7.400M13.300 2.500q4 5.500 0 11"/></svg>
    <svg viewBox="0 0 16 16"><path d="M1.500 14.500Q2.500 3 15 1.500M5 15q.5-8 10-10M8.500 15q.5-5 6.500-6.500"/><circle cx="13" cy="13.500" r="1.300" fill="#fff"/></svg>
    <span class="lang">ENG</span>
    <span class="clock">10:48 am<br>08/03/2024</span>
    <svg class="note" viewBox="0 0 26 26"><path fill="#fff" stroke="none" d="M2 2h16v12H9l-3 3v-3H2z"/><path d="M4.500 5.500h11M4.500 8.500h11M4.500 11.500h7" stroke="#004275"/><circle cx="17.500" cy="17.500" r="7.500" fill="#0c5591" stroke="#6fa3cc"/><text x="14.500" y="21.800" font-family="Open Sans" font-weight="600" font-size="12" fill="#fff" stroke="none">2</text></svg>
  </div>
</div>
</body>
</html>
```
FILE: styles.css
```css
* { box-sizing: border-box; }
body { margin: 0; width: 1920px; height: 1080px; overflow: hidden; display: flex; flex-direction: column; background: #3b3b3b; font-family: "Open Sans", "Noto Sans", sans-serif; color: #fff; font-size: 12px; }
svg { display: block; flex: none; }
.defs { position: absolute; }

.tabs { height: 32px; flex: none; display: flex; background: #202020; }
.tab-tools { width: 127px; display: flex; align-items: center; padding-left: 10px; gap: 19px; }
.tab-tools svg + svg + svg { margin-left: 5px; }
.tab { width: 226px; display: flex; align-items: center; padding: 0 7px 0 11px; letter-spacing: -.32px; }
.tab .fav { width: 16px; height: 16px; margin-right: 10px; }
.tab .dim { opacity: .55; }
.tab span { flex: 1; white-space: nowrap; overflow: hidden; padding-bottom: 1px; mask-image: linear-gradient(90deg, #000 88%, transparent); }
.tab .x { width: 16px; height: 16px; margin-left: 5px; }
.tab.active { background: #3b3b3b; border-radius: 6px 6px 0 0; }
.sep { background: linear-gradient(#666, #666) 0 7px / 1px 19px no-repeat; }
.tab-end { width: 60px; display: flex; align-items: center; padding-left: 10px; }
.win { margin-left: auto; display: flex; align-items: center; gap: 36px; padding-right: 18px; }

.toolbar { height: 40px; flex: none; display: flex; align-items: center; padding-bottom: 2px; }
.navbtns { display: flex; gap: 26px; padding-left: 19px; width: 144px; }
.navbtns svg, .ext svg { width: 18px; height: 18px; fill: none; stroke: #e8e8e8; stroke-width: 1.2; }
.url { width: 1327px; height: 30px; border-radius: 15px; background: #2b2b2b; display: flex; align-items: center; padding: 0 16px 0 19px; }
.addr { margin-left: 16px; font-size: 14px; color: #9a9a9a; letter-spacing: -.3px; padding-bottom: 1px; }
.addr b { font-weight: 400; color: #fff; }
.ua { margin-left: auto; margin-right: 24px; }
.ext { display: flex; gap: 26px; padding-left: 19px; align-items: center; }
.ext svg:nth-child(4) { margin-right: 4px; }
.ext .copilot { width: 24px; height: 24px; margin-left: -4px; }

.bookmarks { height: 32px; flex: none; padding: 0 0 5px 14px; display: grid; grid-template-columns: 149px 152px 142px 144px 152px 152px 149px 154px 153px 152px 150px 1fr 127px; align-items: center; letter-spacing: -.25px; }
.bookmarks a { display: flex; align-items: center; gap: 8px; white-space: nowrap; }
.bookmarks a svg { width: 16px; height: 16px; }
.bookmarks .more { width: 8px; height: 12px; justify-self: end; margin-right: 13px; }
.bookmarks a:last-child { padding-left: 10px; border-left: 1px solid #5c5c5c; }

.viewport { position: relative; height: 932px; flex: none; margin: 0 4px; border-radius: 8px; overflow: hidden; background: #e0e0e0; font-family: Lato, "Open Sans", sans-serif; color: #222; display: flex; flex-direction: column; }
.bg { position: absolute; inset: 0; width: 1912px; height: 932px; }
.site-nav { position: relative; height: 85px; flex: none; background: #e8e5ec; display: flex; padding: 26px 0 0 105px; }
.logo { width: 53px; height: 34px; overflow: visible; }
.site-nav nav { display: flex; gap: 145px; margin-left: 424px; height: 31px; font-size: 18.5px; font-weight: 600; color: #339; letter-spacing: .62px; line-height: 27px; }
.site-nav a { white-space: nowrap; }
.site-nav .on { border-bottom: 3px solid #c90; }
main { position: relative; padding: 0 105px; }
.top { display: flex; justify-content: space-between; height: 310px; }
.map { width: 600px; height: 310px; border-radius: 0 0 0 26px; overflow: hidden; }
.lab { font-family: Roboto, sans-serif; font-size: 13px; fill: #fff; stroke: #10142c; stroke-width: 2.2px; paint-order: stroke; }
.lab .s { font-size: 11px; }
.lab .r { font-size: 14px; }
.lab .goog { font-family: "Open Sans", sans-serif; font-size: 15px; }
.info { width: 841px; background: #c90; border-radius: 0 0 26px 26px; padding: 0 37px; font-size: 18.5px; font-weight: 500; letter-spacing: .44px; }
.facts { display: flex; height: 27px; line-height: 26px; }
.price { width: 334px; border-right: 3px solid #fff; white-space: nowrap; }
.rooms { padding-left: 38px; letter-spacing: -.1px; }
.desc { margin: 18px 0 19px; height: 61px; overflow: hidden; line-height: 26px; white-space: nowrap; }
.ctas { margin: 0 80px; display: flex; flex-direction: column; gap: 5px; }
.ctas a { height: 46px; border-radius: 8px; background: linear-gradient(#3d57ad, #25308a); color: #fff; font-weight: 600; letter-spacing: .4px; display: flex; align-items: center; justify-content: space-between; padding: 0 32px 5px 33px; }
.ctas svg { margin-top: 4px; }
.title { margin: 19px 0 20px; height: 36px; line-height: 35px; border-left: 4px solid #c90; padding-left: 22px; font-size: 25.5px; font-weight: 600; color: #339; letter-spacing: .6px; }
.panel { height: 302px; border-radius: 18px; background: linear-gradient(#d5d5d5, #e8e8e8); padding: 21px 20px; }
.panel h3 { margin: 0; text-align: center; font-size: 23px; line-height: 28px; font-weight: 600; color: #339; letter-spacing: .6px; }
.grid { display: grid; grid-template-columns: repeat(6, 277px); margin-top: 1px; }
.grid div { height: 55px; display: flex; align-items: center; gap: 11px; font-size: 18.7px; font-weight: 500; color: #2f3fbd; letter-spacing: .42px; white-space: nowrap; }
.grid svg { width: 17px; height: 16px; fill: #dfaa08; margin-top: 2px; }
.panel hr { height: 2px; border: 0; background: #c90; margin: 18px 0 17px; }
.panel hr ~ .grid { margin-top: -1px; }
footer { display: grid; grid-template-columns: 262px 392px 655px 393px; margin-top: 38px; font-size: 17px; letter-spacing: .2px; }
footer h4 { margin: 0; font-size: 26px; font-weight: 600; line-height: 36px; color: #339; letter-spacing: .5px; }
footer a { display: block; height: 34.5px; line-height: 34px; }
footer p { margin: 11px 0 0; line-height: 23px; white-space: nowrap; }
footer p b { font-weight: 600; letter-spacing: .28px; }
.form { margin-top: 13px; height: 50px; background: #fff; border-radius: 6px; display: flex; justify-content: space-between; font-size: 15px; letter-spacing: .08px; line-height: 46px; }
.form span { padding-left: 12px; color: #666; }
.form b { width: 152px; background: #c90; border-radius: 6px; color: #fff; text-align: center; font-weight: 600; }
small { display: block; font-size: 11px; line-height: 21px; color: #aaa; letter-spacing: .15px; }
.back { position: absolute; left: 16px; top: 872px; width: 96px; height: 44px; border-radius: 22px; background: #c90; color: #fff; font-size: 15px; font-weight: 600; display: flex; align-items: center; gap: 13px; padding-left: 20px; }
.back span { padding-bottom: 2px; }

.taskbar { height: 40px; flex: none; margin-top: 4px; background: #004275; display: flex; }
.sys { width: 147px; display: flex; gap: 32px; padding-left: 16px; align-items: center; }
.sys svg { width: 16px; height: 16px; }
.apps { display: flex; }
.apps i { width: 48.9px; height: 40px; display: flex; align-items: center; justify-content: center; }
.apps svg { width: 24px; height: 24px; }
.apps .cur { background: linear-gradient(#a5cdf3, #a5cdf3) 0 38px / 49px 2px no-repeat #005a9e; }
.apps .run { background: linear-gradient(#a5cdf3, #a5cdf3) 4px 38px / 41px 2px no-repeat; }
.tray { margin-left: auto; display: flex; align-items: center; padding-right: 14px; }
.tray svg { width: 16px; height: 16px; margin-right: 17px; fill: none; stroke: #fff; stroke-width: 1.1; }
.tray .lang { width: 25px; margin-left: -4px; letter-spacing: -.3px; }
.tray .clock { width: 80px; text-align: center; line-height: 17.5px; letter-spacing: -.35px; margin-right: 6px; }
.tray .note { width: 26px; height: 26px; margin: 6px 0 0; }
```
